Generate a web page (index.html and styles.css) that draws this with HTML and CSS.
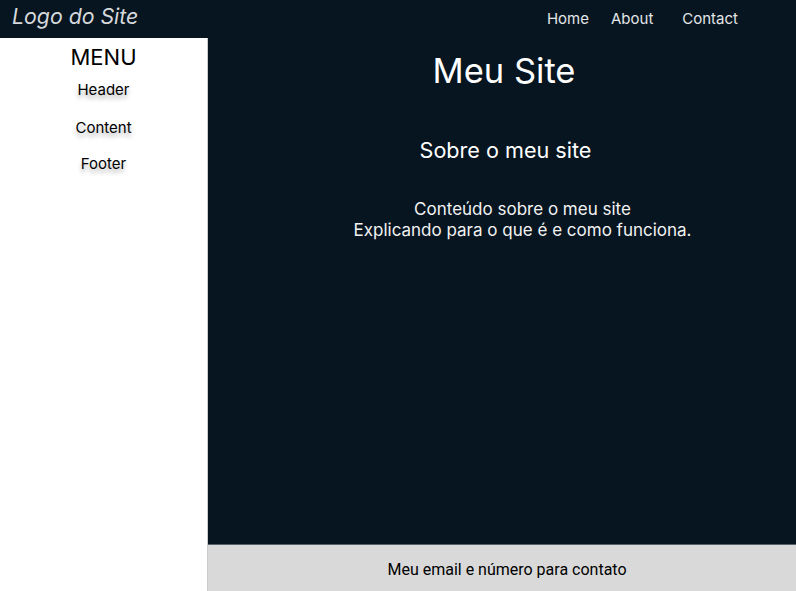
FILE: index.html
```html
<!DOCTYPE html>
<html lang="pt">
<head>
<meta charset="utf-8">
<title>Meu Site</title>
<link rel="stylesheet" href="styles.css">
</head>
<body>
<header class="topbar">
  <div class="logo">Logo do Site</div>
  <nav class="nav">
    <a class="nav-link home">Home</a>
    <a class="nav-link about">About</a>
    <a class="nav-link contact">Contact</a>
  </nav>
</header>
<div class="layout">
  <aside class="sidebar">
    <div class="menu-title">MENU</div>
    <div class="menu-item">Header</div>
    <div class="menu-item">Content</div>
    <div class="menu-item">Footer</div>
  </aside>
  <div class="right">
    <main class="content">
      <h1 class="title">Meu Site</h1>
      <h2 class="subtitle">Sobre o meu site</h2>
      <p class="text">Conteúdo sobre o meu site<br>Explicando para o que é e como funciona.</p>
    </main>
    <footer class="footer">Meu email e número para contato</footer>
  </div>
</div>
</body>
</html>
```
FILE: styles.css
```css
* { box-sizing: border-box; }
html, body { margin: 0; padding: 0; }
body {
  width: 796px;
  height: 591px;
  overflow: hidden;
  font-family: Inter, "Noto Sans", sans-serif;
  background: #061520;
  display: flex;
  flex-direction: column;
}
.topbar {
  height: 38px;
  background: #061520;
  display: flex;
  align-items: center;
  justify-content: space-between;
}
.logo {
  font-style: italic;
  font-size: 21.3px;
  color: #d6d9dc;
  padding-left: 12px;
  margin-top: -7px;
}
.nav {
  display: flex;
  padding-right: 58px;
  margin-top: -2px;
}
.nav-link {
  color: #e4e6e8;
  font-size: 15px;
}
.about { margin-left: 22px; }
.contact { margin-left: 29px; }
.layout {
  flex: 1;
  display: flex;
}
.sidebar {
  width: 208px;
  background: #ffffff;
  border-right: 1px solid #c8cbcd;
  display: flex;
  flex-direction: column;
  align-items: center;
}
.menu-title {
  font-size: 22px;
  color: #000;
  margin-top: 6px;
  line-height: 26px;
}
.menu-item {
  font-size: 15px;
  color: #000;
  text-shadow: 0 4px 4px rgba(0,0,0,0.3);
  line-height: 18px;
}
.menu-item:nth-of-type(2) { margin-top: 11px; }
.menu-item:nth-of-type(3) { margin-top: 20px; }
.menu-item:nth-of-type(4) { margin-top: 18px; }
.right {
  flex: 1;
  display: flex;
  flex-direction: column;
}
.content {
  flex: 1;
  background: #061520;
  color: #fff;
  text-align: center;
}
.title {
  margin: 12px 0 0 0;
  font-size: 34.5px;
  font-weight: 400;
  line-height: 42px;
  padding-left: 4px;
}
.subtitle {
  margin: 45px 0 0 0;
  font-size: 21.6px;
  font-weight: 400;
  line-height: 26px;
  padding-left: 7px;
}
.text {
  margin: 36px 0 0 0;
  font-size: 17px;
  line-height: 21px;
  color: #f2f2f2;
  padding-left: 41px;
}
.footer {
  height: 47px;
  background: #d9d9d9;
  border-top: 1px solid #5a6268;
  font-family: Roboto, sans-serif;
  font-size: 16px;
  color: #000;
  display: flex;
  align-items: center;
  justify-content: center;
  padding-left: 10px;
  padding-top: 2px;
}
```
